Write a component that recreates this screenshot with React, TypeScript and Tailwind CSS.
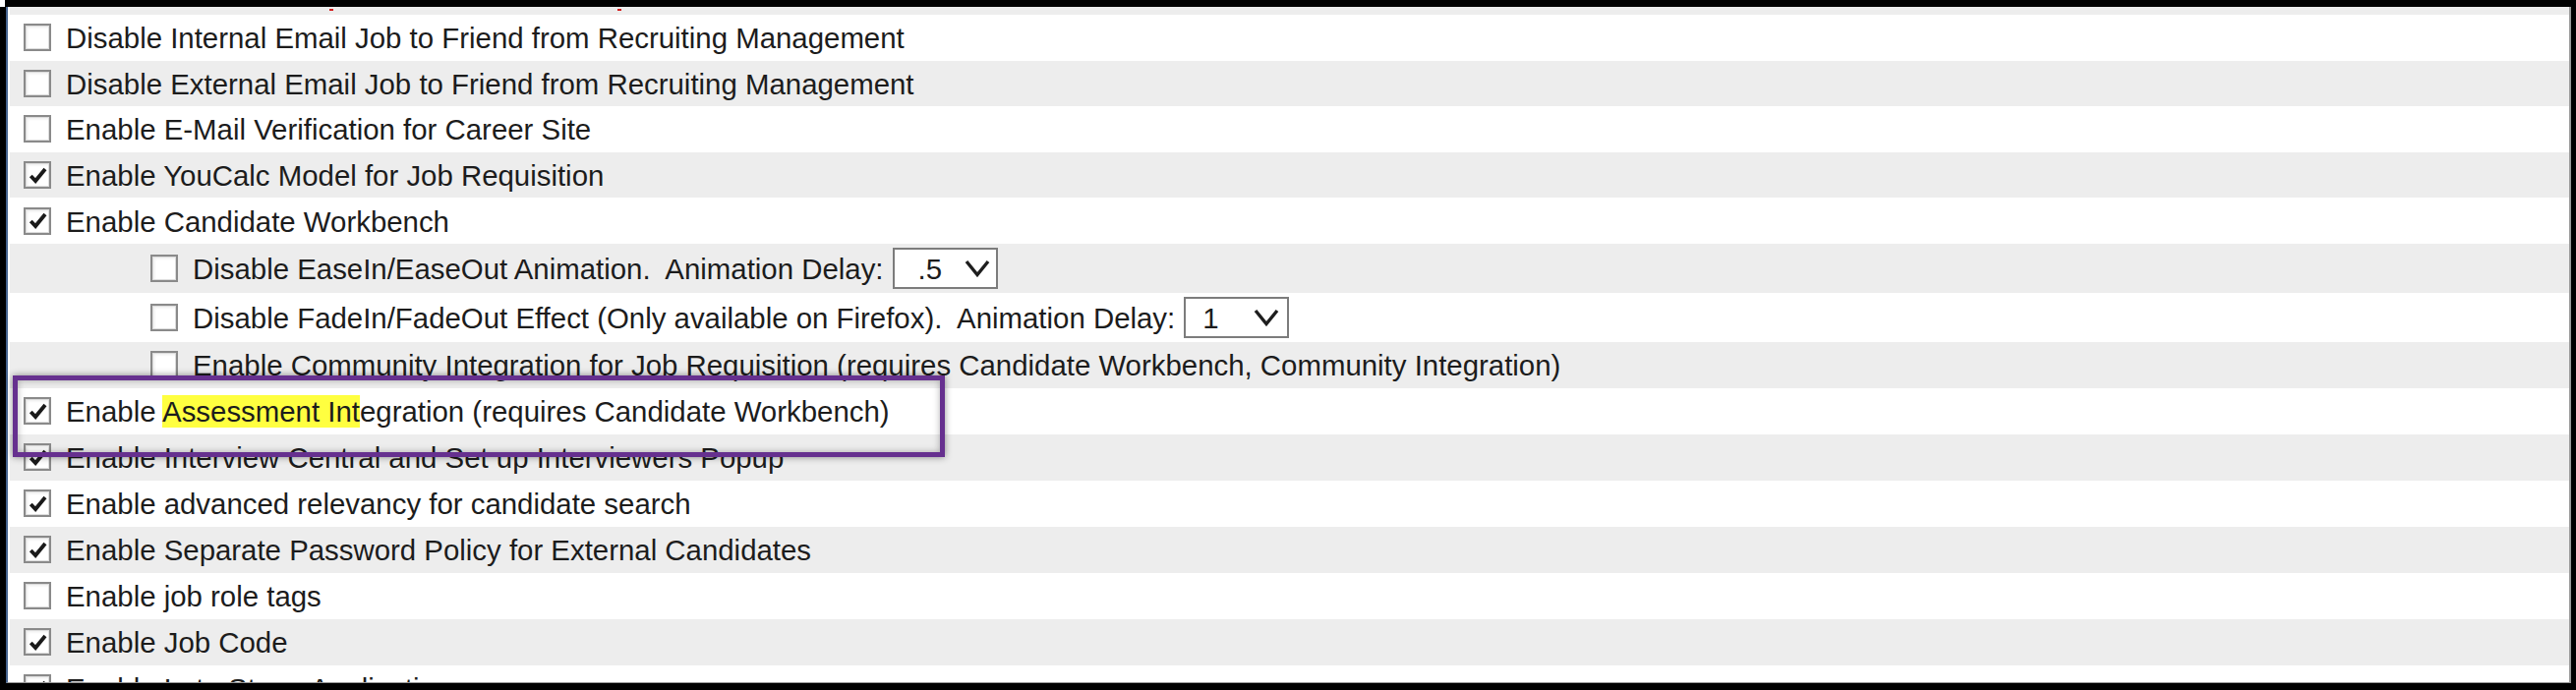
import React from "react";

function Box({ checked }: { checked: boolean }) {
  return (
    <span className="flex h-[28px] w-[28px] shrink-0 items-center justify-center border-2 border-[#8a8a8a] bg-white shadow-[inset_0_0_0_1px_#dcdcdc,inset_2px_2px_3px_rgba(0,0,0,0.08)]">
      {checked && (
        <svg viewBox="0 0 24 24" className="h-[23px] w-[23px]">
          <path d="M4.5 12.5 L9.5 17.8 L19.8 5.2" fill="none" stroke="#1a1a1a" strokeWidth="4" strokeLinejoin="miter" />
        </svg>
      )}
    </span>
  );
}

function Chevron() {
  return (
    <svg viewBox="0 0 26 18" className="h-[18px] w-[26px]">
      <polyline points="2,2 13,15.5 24,2" fill="none" stroke="#1e1e1e" strokeWidth="3.4" />
    </svg>
  );
}

function Row({
  checked,
  indent,
  gray,
  h,
  children,
}: {
  checked: boolean;
  indent?: boolean;
  gray?: boolean;
  h: string;
  children: React.ReactNode;
}) {
  return (
    <div
      className={
        "flex shrink-0 items-center gap-[15px] " +
        h +
        (gray ? " bg-[#ededed]" : " bg-white") +
        (indent ? " pl-[143px]" : " pl-[14px]")
      }
    >
      <Box checked={checked} />
      <span className="whitespace-pre pt-[2px]">{children}</span>
    </div>
  );
}

export default function App() {
  return (
    <div className="relative h-[702px] w-[2620px] overflow-hidden bg-black pb-[7px] pl-[6px] pr-[5px] pt-[7px] font-['Liberation_Sans',Arial,sans-serif] text-[29.4px] leading-normal text-[#1c1c1c]">
      <div className="absolute left-0 top-0 h-[7px] w-[5px] bg-white" />
      <div className="flex h-full flex-col overflow-hidden border-b border-l-2 border-r-2 border-b-[#9a9a9a] border-l-[#46648f] border-r-[#9a9a9a] bg-white pl-[2px]">
        <div className="relative h-[8px] shrink-0 bg-[#ededed]">
          <span className="absolute left-[325px] top-[2px] h-[2px] w-[4px] bg-[#d42020]" />
          <span className="absolute left-[618px] top-[2px] h-[2px] w-[4px] bg-[#d42020]" />
        </div>
        <Row checked={false} h="h-[46.6px]">Disable Internal Email Job to Friend from Recruiting Management</Row>
        <Row checked={false} gray h="h-[46.6px]">Disable External Email Job to Friend from Recruiting Management</Row>
        <Row checked={false} h="h-[46.6px]">Enable E-Mail Verification for Career Site</Row>
        <Row checked={true} gray h="h-[46.6px]">Enable YouCalc Model for Job Requisition</Row>
        <Row checked={true} h="h-[46.6px]">Enable Candidate Workbench</Row>
        <div className="flex h-[50px] shrink-0 items-center gap-[15px] bg-[#ededed] pl-[143px]">
          <Box checked={false} />
          <span className="whitespace-pre pt-[2px]">Disable EaseIn/EaseOut Animation.  Animation Delay:</span>
          <span className="-ml-[6px] flex h-[42px] w-[107px] shrink-0 items-center border-2 border-[#7c7c7c] bg-white pl-[24px] pr-[6px]">
            <span className="pt-[2px]">.5</span>
            <span className="ml-auto flex">
              <Chevron />
            </span>
          </span>
        </div>
        <div className="flex h-[50px] shrink-0 items-center gap-[15px] bg-white pl-[143px]">
          <Box checked={false} />
          <span className="whitespace-pre pt-[2px]">Disable FadeIn/FadeOut Effect (Only available on Firefox).  Animation Delay:</span>
          <span className="-ml-[6px] flex h-[42px] w-[107px] shrink-0 items-center border-2 border-[#7c7c7c] bg-white pl-[17px] pr-[8px]">
            <span className="pt-[2px]">1</span>
            <span className="ml-auto flex">
              <Chevron />
            </span>
          </span>
        </div>
        <Row checked={false} indent gray h="h-[47px]">Enable Community Integration for Job Requisition (requires Candidate Workbench, Community Integration)</Row>
        <Row checked={true} h="h-[47px]">
          Enable <span className="bg-[#ffff40]">Assessment Int</span>egration (requires Candidate Workbench)
        </Row>
        <Row checked={true} gray h="h-[47px]">Enable Interview Central and Set up Interviewers Popup</Row>
        <Row checked={true} h="h-[47px]">Enable advanced relevancy for candidate search</Row>
        <Row checked={true} gray h="h-[47px]">Enable Separate Password Policy for External Candidates</Row>
        <Row checked={false} h="h-[47px]">Enable job role tags</Row>
        <Row checked={true} gray h="h-[47px]">Enable Job Code</Row>
        <Row checked={true} h="h-[47px]">Enable Late Stage Application</Row>
      </div>
      <div className="pointer-events-none absolute left-[13px] top-[382px] h-[83px] w-[948px] border-[5px] border-[#66308f] shadow-[0_0_7px_rgba(0,0,0,0.45),inset_0_0_7px_rgba(0,0,0,0.3)]" />
    </div>
  );
}
